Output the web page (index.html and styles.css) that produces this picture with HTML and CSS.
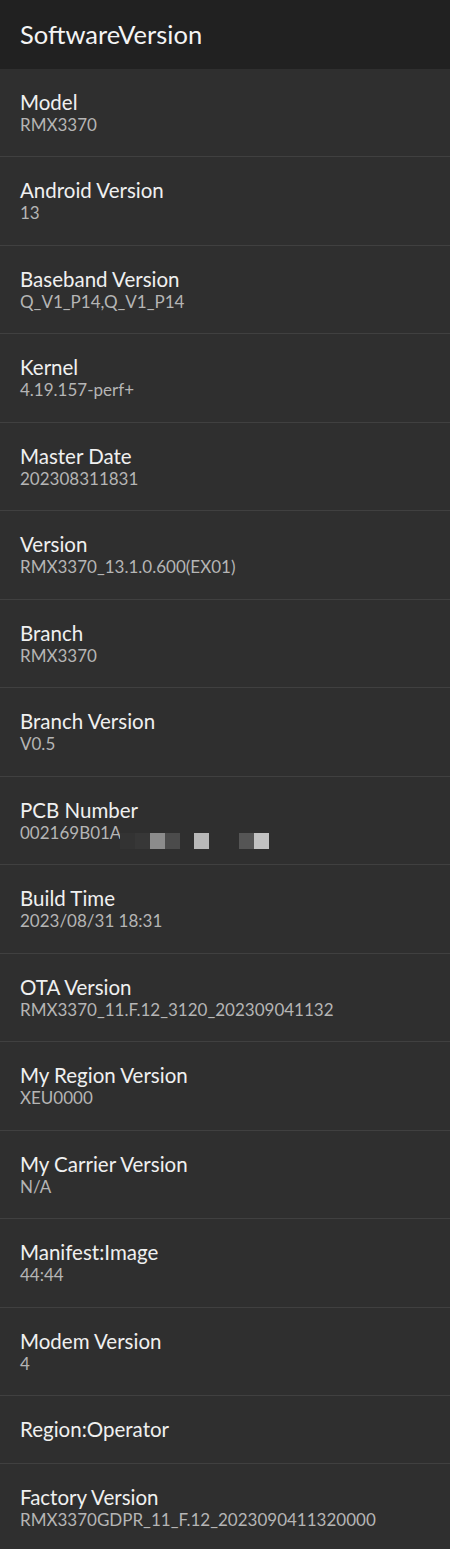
FILE: index.html
```html
<!DOCTYPE html>
<html>
<head>
<meta charset="utf-8">
<link rel="stylesheet" href="styles.css">
</head>
<body>
<header class="topbar"><h1 class="topbar-title">SoftwareVersion</h1></header>
<ul class="list">
  <li class="item"><div class="item-title">Model</div><div class="item-sub">RMX3370</div></li>
  <li class="item"><div class="item-title">Android Version</div><div class="item-sub">13</div></li>
  <li class="item"><div class="item-title">Baseband Version</div><div class="item-sub">Q_V1_P14,Q_V1_P14</div></li>
  <li class="item"><div class="item-title">Kernel</div><div class="item-sub">4.19.157-perf+</div></li>
  <li class="item"><div class="item-title">Master Date</div><div class="item-sub">202308311831</div></li>
  <li class="item"><div class="item-title">Version</div><div class="item-sub">RMX3370_13.1.0.600(EX01)</div></li>
  <li class="item"><div class="item-title">Branch</div><div class="item-sub">RMX3370</div></li>
  <li class="item"><div class="item-title">Branch Version</div><div class="item-sub">V0.5</div></li>
  <li class="item"><div class="item-title">PCB Number</div><div class="item-sub redacted-line">002169B01A<span class="redact"><i class="px p1"></i><i class="px p2"></i><i class="px p3"></i><i class="px p4"></i><i class="px p0"></i><i class="px p5"></i><i class="px p0 wide"></i><i class="px p6"></i><i class="px p7"></i></span></div></li>
  <li class="item"><div class="item-title">Build Time</div><div class="item-sub">2023/08/31 18:31</div></li>
  <li class="item"><div class="item-title">OTA Version</div><div class="item-sub">RMX3370_11.F.12_3120_202309041132</div></li>
  <li class="item"><div class="item-title">My Region Version</div><div class="item-sub">XEU0000</div></li>
  <li class="item"><div class="item-title">My Carrier Version</div><div class="item-sub">N/A</div></li>
  <li class="item"><div class="item-title">Manifest:Image</div><div class="item-sub">44:44</div></li>
  <li class="item"><div class="item-title">Modem Version</div><div class="item-sub">4</div></li>
  <li class="item"><div class="item-title">Region:Operator</div></li>
  <li class="item"><div class="item-title">Factory Version</div><div class="item-sub">RMX3370GDPR_11_F.12_2023090411320000</div></li>
</ul>
</body>
</html>
```
FILE: styles.css
```css
html, body {
  margin: 0;
  padding: 0;
  background: #2f2f2f;
  font-family: Lato, "Noto Sans", sans-serif;
}
.topbar {
  height: 69px;
  background: #212121;
  display: flex;
  align-items: center;
  padding: 0 20px;
  box-sizing: border-box;
}
.topbar-title {
  margin: 0;
  font-size: 25.5px;
  font-weight: 400;
  color: #f4f4f4;
  line-height: 30px;
  padding-bottom: 2px;
}
.list {
  list-style: none;
  margin: 0;
  padding: 0;
}
.item {
  padding: 22px 20px 21.47px;
  border-bottom: 1px solid #404040;
  background: #2f2f2f;
}
.item-title {
  font-size: 20.5px;
  line-height: 23px;
  color: #f0f0f0;
}
.item-sub {
  font-size: 17px;
  line-height: 21px;
  color: #b5b5b5;
}
.redacted-line {
  position: relative;
}
.redact {
  position: absolute;
  left: 100px;
  top: 11px;
  display: flex;
}
.px {
  display: block;
  width: 15px;
  height: 16px;
}
.px.wide { width: 30px; }
.p1 { background: #333333; }
.p2 { background: #373737; }
.p3 { background: #8c8c8c; }
.p4 { background: #4b4b4b; }
.p0 { background: transparent; width: 14px; }
.p5 { background: #b8b8b8; }
.p6 { background: #555555; }
.p7 { background: #c2c2c2; }
```
